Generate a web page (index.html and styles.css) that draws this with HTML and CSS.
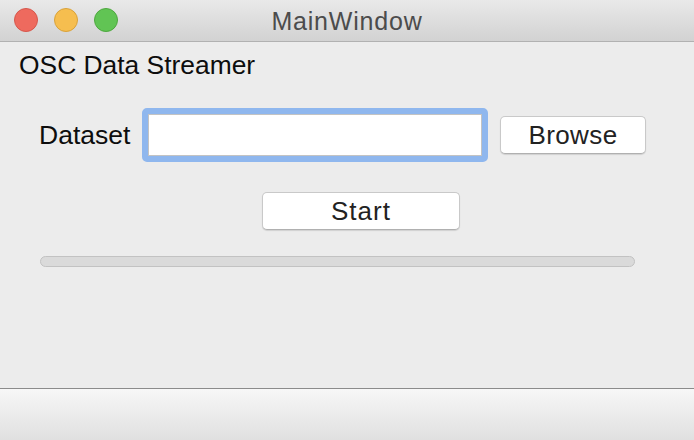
FILE: index.html
```html
<!DOCTYPE html>
<html>
<head>
<meta charset="utf-8">
<link rel="stylesheet" href="styles.css">
</head>
<body>
<div class="window">
  <div class="titlebar">
    <div class="lights">
      <span class="light red"></span>
      <span class="light yellow"></span>
      <span class="light green"></span>
    </div>
    <div class="title">MainWindow</div>
  </div>
  <div class="content">
    <div class="heading">OSC Data Streamer</div>
    <div class="row">
      <span class="label">Dataset</span>
      <div class="field"><div class="field-inner"></div></div>
      <div class="button browse">Browse</div>
    </div>
    <div class="start-row">
      <div class="button start">Start</div>
    </div>
    <div class="progress"></div>
  </div>
  <div class="statusbar"></div>
</div>
</body>
</html>
```

FILE: styles.css
```css
html, body {
  margin: 0;
  padding: 0;
}
body {
  width: 694px;
  height: 440px;
  overflow: hidden;
  background: #ececec;
  font-family: "Liberation Sans", Arial, sans-serif;
}
.window {
  display: flex;
  flex-direction: column;
  height: 440px;
}
.titlebar {
  position: relative;
  height: 41px;
  flex: none;
  background: linear-gradient(to bottom, #e9e9e9, #d2d2d2);
  border-bottom: 1px solid #b1b1b1;
  display: flex;
  align-items: center;
  justify-content: center;
}
.lights {
  position: absolute;
  left: 14px;
  top: 8px;
  display: flex;
  gap: 16px;
}
.light {
  width: 22px;
  height: 22px;
  border-radius: 50%;
  border: 1px solid;
  display: block;
}
.red { background: #ee6a5e; border-color: #d6574c; }
.yellow { background: #f6be4f; border-color: #d9a23a; }
.green { background: #61c454; border-color: #4ea83f; }
.title {
  font-size: 25px;
  letter-spacing: 0.8px;
  color: #4c4c4c;
  padding-top: 1px;
}
.content {
  flex: 1;
  padding: 8px 0 0 19px;
}
.heading {
  font-size: 26.4px;
  line-height: 30px;
  color: #0d0d0d;
}
.row {
  display: flex;
  align-items: center;
  margin-top: 28px;
  height: 54px;
}
.label {
  font-size: 26.5px;
  color: #0d0d0d;
  margin-left: 20px;
  width: 103px;
}
.field {
  width: 334px;
  height: 42px;
  border: 6px solid #8fb7ee;
  border-radius: 5px;
  box-sizing: content-box;
}
.field-inner {
  height: 40px;
  background: #fff;
  border: 1px solid #c3c3c3;
}
.button {
  box-sizing: border-box;
  background: #fff;
  border: 1px solid #c9c9c9;
  border-bottom-color: #b0b0b0;
  border-radius: 5px;
  box-shadow: 0 1px 1px rgba(0,0,0,0.12);
  font-size: 26px;
  letter-spacing: 0.4px;
  color: #222;
  display: flex;
  align-items: center;
  justify-content: center;
}
.browse {
  width: 146px;
  height: 38px;
  margin-left: 12px;
}
.start-row {
  margin-top: 30px;
  padding-left: 243px;
}
.start {
  width: 198px;
  height: 38px;
  letter-spacing: 1px;
}
.progress {
  margin-top: 26px;
  margin-left: 21px;
  width: 593px;
  height: 9px;
  background: #dadada;
  border: 1px solid #c2c2c2;
  border-radius: 6px;
}
.statusbar {
  flex: none;
  height: 51px;
  border-top: 1px solid #8b8b8b;
  background: linear-gradient(to bottom, #f7f7f7, #e0e0e0);
}
```
